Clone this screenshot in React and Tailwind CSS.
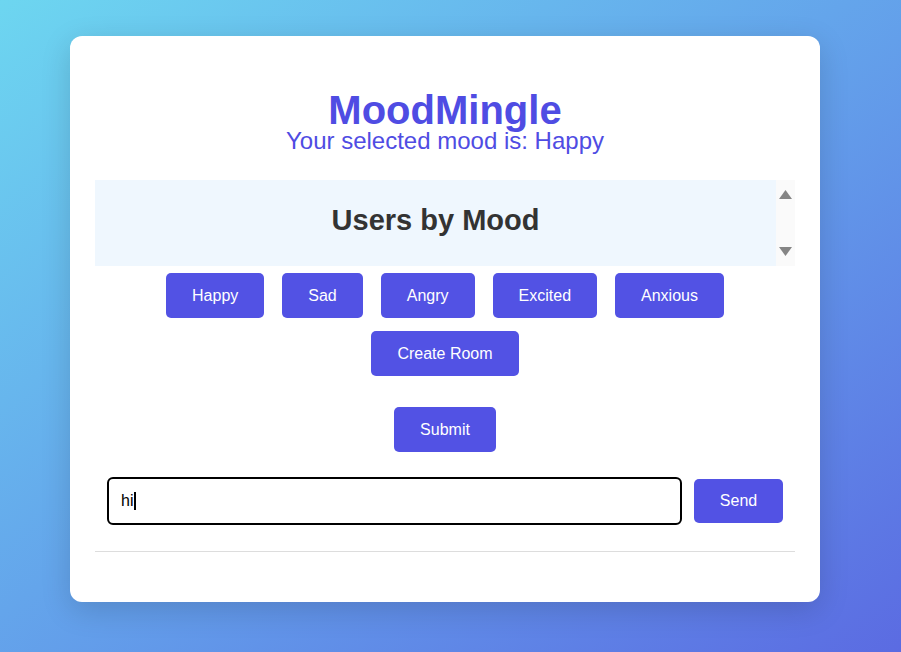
const MOODS = ['Happy', 'Sad', 'Angry', 'Excited', 'Anxious']

function Btn({ children, className = '' }) {
  return (
    <button className={`h-[45px] rounded-[5px] bg-[#5252e4] px-[26px] text-[16px] text-white ${className}`}>
      {children}
    </button>
  )
}

export default function App() {
  return (
    <div
      className="flex min-h-[652px] w-full bg-gradient-to-br from-[#6dd6f0] to-[#5b6be2] pl-[70px] pt-[36px]"
      style={{ fontFamily: '"Liberation Sans", Arial, sans-serif' }}
    >
      <div className="flex h-[566px] w-[750px] flex-col rounded-[12px] bg-white px-[25px] pt-[54px] shadow-[0_8px_30px_rgba(0,0,0,0.15)]">
        <h1 className="text-center text-[40px] font-bold leading-[40px] text-[#4f4ce3]">MoodMingle</h1>
        <p className="text-center text-[24px] leading-[22px] text-[#4f4ce3]">Your selected mood is: Happy</p>

        <div className="mt-[28px] flex h-[86px]">
          <div className="flex flex-1 items-center justify-center bg-[#eff7fe] pb-[4px]">
            <h2 className="text-[29px] font-bold text-[#333]">Users by Mood</h2>
          </div>
          <div className="flex w-[19px] flex-col items-center justify-between bg-[#fafafa] py-[10px]">
            <svg width="13" height="9" viewBox="0 0 13 9"><path d="M6.5 0 L13 9 L0 9 Z" fill="#858585" /></svg>
            <svg width="13" height="9" viewBox="0 0 13 9"><path d="M0 0 L13 0 L6.5 9 Z" fill="#858585" /></svg>
          </div>
        </div>

        <div className="mt-[7px] flex justify-center gap-[18px]">
          {MOODS.map(m => <Btn key={m}>{m}</Btn>)}
        </div>
        <div className="mt-[13px] flex justify-center">
          <Btn>Create Room</Btn>
        </div>
        <div className="mt-[31px] flex justify-center">
          <Btn>Submit</Btn>
        </div>

        <div className="mt-[25px] flex items-center gap-[12px] px-[12px]">
          <div className="flex h-[48px] flex-1 items-center rounded-[6px] border-2 border-black px-[12px] text-[16px] text-black">
            hi<span className="ml-px inline-block h-[18px] w-[2px] bg-black" />
          </div>
          <button className="h-[44px] w-[89px] rounded-[5px] bg-[#5252e4] text-[16px] text-white">Send</button>
        </div>

        <div className="mt-[26px] border-t border-[#dddddd]" />
      </div>
    </div>
  )
}
